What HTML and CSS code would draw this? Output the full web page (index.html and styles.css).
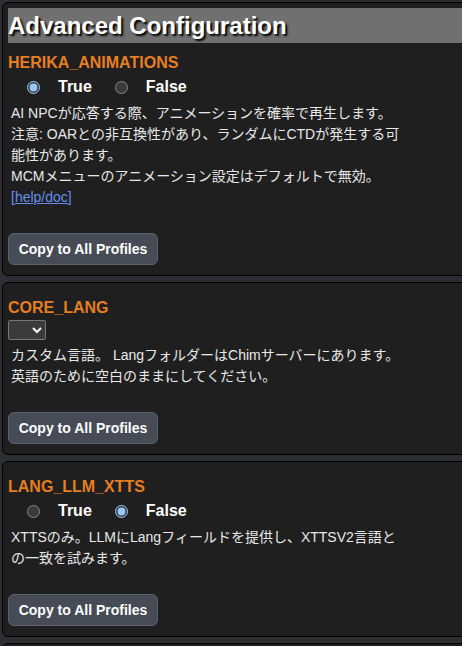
FILE: index.html
```html
<!DOCTYPE html>
<html>
<head>
  <meta charset="UTF-8">
  <title>Advanced Configuration</title>
  <meta name="viewport" content="width=device-width, initial-scale=1">
  <link rel="stylesheet" href="styles.css">
</head>
<body>
  <div class="card">
    <h1>Advanced Configuration</h1>
    <div class="name">HERIKA_ANIMATIONS</div>
    <div class="options">
      <label><input type="radio" name="anim" checked> True</label>
      <label><input type="radio" name="anim"> False</label>
    </div>
    <div class="desc">
      AI NPCが応答する際、アニメーションを確率で再生します。<br>
      注意: OARとの非互換性があり、ランダムにCTDが発生する可能性があります。<br>
      MCMメニューのアニメーション設定はデフォルトで無効。<br>
      <a href="#">[help/doc]</a>
    </div>
    <button>Copy to All Profiles</button>
  </div>

  <div class="card">
    <div class="name">CORE_LANG</div>
    <div class="select-row">
      <select><option></option></select>
    </div>
    <div class="desc">
      カスタム言語。 LangフォルダーはChimサーバーにあります。<br>
      英語のために空白のままにしてください。
    </div>
    <button>Copy to All Profiles</button>
  </div>

  <div class="card">
    <div class="name">LANG_LLM_XTTS</div>
    <div class="options">
      <label><input type="radio" name="xtts"> True</label>
      <label><input type="radio" name="xtts" checked> False</label>
    </div>
    <div class="desc">
      XTTSのみ。LLMにLangフィールドを提供し、XTTSV2言語との一致を試みます。
    </div>
    <button>Copy to All Profiles</button>
  </div>

  <div class="card card-next"></div>
</body>
</html>
```

FILE: styles.css
```css
html {
  color-scheme: dark;
}
body {
  margin: 0;
  padding: 2px;
  min-width: 700px;
  background: #2c2e33;
  color: #e8e8e8;
  font-family: "Liberation Sans", Arial, "Noto Sans CJK JP", sans-serif;
  overflow-x: hidden;
}
.card {
  background: #1f1f1f;
  border: 1px solid #000;
  border-radius: 6px;
  padding: 5px 5px 10px;
  margin-bottom: 6px;
}
.card-next {
  height: 40px;
}
h1 {
  margin: 0;
  height: 35px;
  line-height: 35px;
  background: #707070;
  color: #fff;
  font-size: 24px;
  font-weight: bold;
  text-shadow: 2px 2px 2px #000;
}
.name {
  margin-top: 10px;
  line-height: 19px;
  font-size: 16px;
  font-weight: bold;
  color: #e67e22;
}
.options {
  display: flex;
  gap: 23px;
  height: 22px;
  margin-top: 4px;
  padding-left: 19px;
}
.options label {
  display: flex;
  align-items: center;
  gap: 18px;
  font-size: 16px;
  font-weight: bold;
  color: #fff;
}
.options input {
  margin: 0;
  width: 13px;
  height: 13px;
}
.select-row {
  margin: 3px 0 2px;
  height: 20px;
}
select {
  width: 38px;
  height: 20px;
  background: #3b3b3b;
  border: 1px solid #777;
  border-radius: 2px;
}
.desc {
  margin-top: 5px;
  padding-left: 3px;
  max-width: 393px;
  font-size: 14px;
  line-height: 21px;
}
.desc a {
  color: #6690ec;
}
button {
  display: block;
  margin-top: 25px;
  width: 150px;
  height: 32px;
  background: #464b55;
  color: #fff;
  border: 1px solid #5c616b;
  border-radius: 6px;
  font-family: "Liberation Sans", Arial, sans-serif;
  font-size: 14px;
  font-weight: bold;
}
```
